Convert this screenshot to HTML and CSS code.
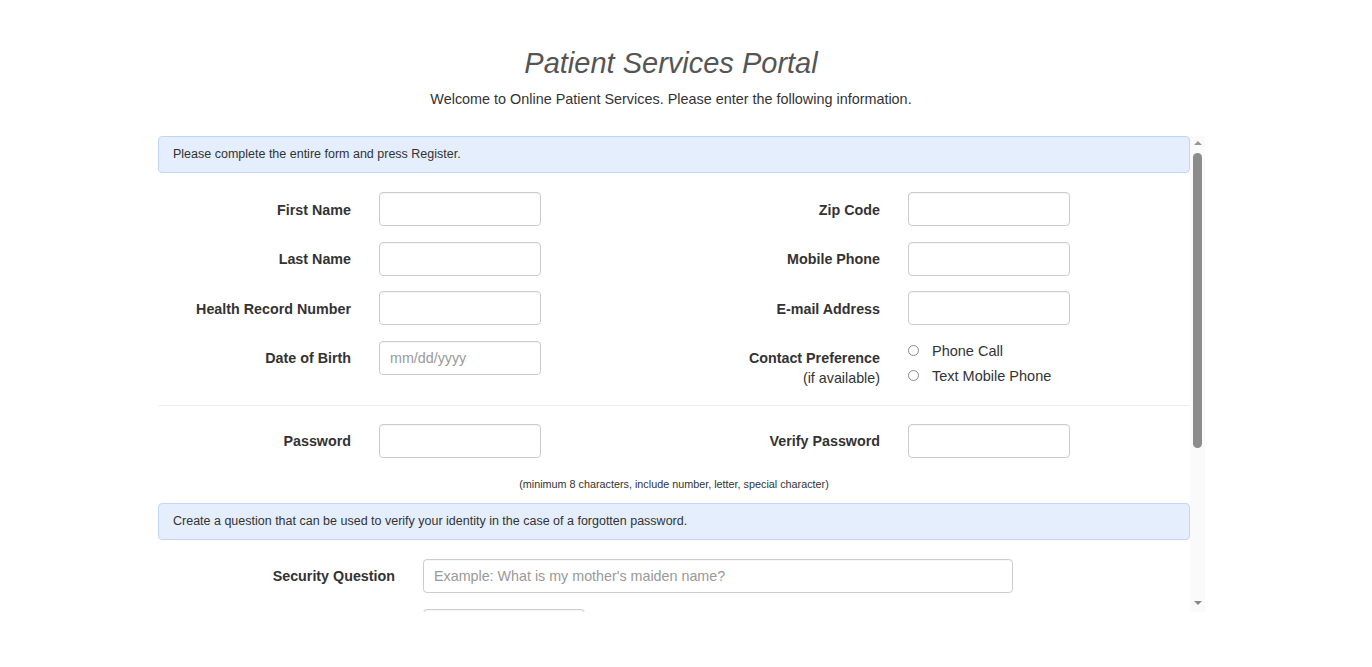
FILE: index.html
```html
<!DOCTYPE html>
<html lang="en">
<head>
<meta charset="utf-8">
<title>Patient Services Portal</title>
<link rel="stylesheet" href="styles.css">
</head>
<body>
<div class="page">
  <header class="header">
    <h1 class="title">Patient Services Portal</h1>
    <p class="welcome">Welcome to Online Patient Services. Please enter the following information.</p>
  </header>
  <div class="scroll-area">
    <div class="content">
      <div class="alert">Please complete the entire form and press Register.</div>

      <div class="rows">
        <div class="row">
          <div class="field"><label class="label">First Name</label><input class="input" type="text"></div>
          <div class="field field-right"><label class="label">Zip Code</label><input class="input" type="text"></div>
        </div>
        <div class="row">
          <div class="field"><label class="label">Last Name</label><input class="input" type="text"></div>
          <div class="field field-right"><label class="label">Mobile Phone</label><input class="input" type="text"></div>
        </div>
        <div class="row">
          <div class="field"><label class="label">Health Record Number</label><input class="input" type="text"></div>
          <div class="field field-right"><label class="label">E-mail Address</label><input class="input" type="text"></div>
        </div>
        <div class="row row-contact">
          <div class="field"><label class="label">Date of Birth</label><input class="input" type="text" placeholder="mm/dd/yyyy"></div>
          <div class="field field-right">
            <div class="label">Contact Preference<span class="sub">(if available)</span></div>
            <div class="radios">
              <label class="radio"><input type="radio" name="pref" class="radio-box">Phone Call</label>
              <label class="radio"><input type="radio" name="pref" class="radio-box">Text Mobile Phone</label>
            </div>
          </div>
        </div>
      </div>

      <hr class="divider">

      <div class="row row-pass">
        <div class="field"><label class="label">Password</label><input class="input" type="password"></div>
        <div class="field field-right"><label class="label">Verify Password</label><input class="input" type="password"></div>
      </div>
      <p class="hint">(minimum 8 characters, include number, letter, special character)</p>

      <div class="alert alert-2">Create a question that can be used to verify your identity in the case of a forgotten password.</div>

      <div class="rows rows-security">
        <div class="field field-wide"><label class="label">Security Question</label><input class="input input-wide" type="text" placeholder="Example: What is my mother's maiden name?"></div>
        <div class="field field-wide"><label class="label" aria-label="Security Answer"></label><input class="input" type="text"></div>
      </div>
    </div>
    <div class="scrollbar" aria-hidden="true">
      <span class="arrow arrow-up"></span>
      <span class="thumb"></span>
      <span class="arrow arrow-down"></span>
    </div>
  </div>
</div>
</body>
</html>
```
FILE: styles.css
```css
html, body {
  margin: 0;
  padding: 0;
  background: #ffffff;
}

body {
  font-family: "Liberation Sans", Arial, sans-serif;
  color: #333333;
  font-size: 14.4px;
}

.page {
  width: 1047px;
  margin-left: 158px;
}

.header {
  width: 1026px;
  text-align: center;
}

.title {
  margin: 45px 0 0;
  font-size: 29px;
  line-height: 36px;
  font-style: italic;
  font-weight: normal;
  color: #555555;
}

.welcome {
  margin: 8px 0 0;
  font-size: 14.4px;
  line-height: 20px;
  color: #333333;
}

.scroll-area {
  margin-top: 27px;
  height: 476px;
  display: flex;
  background: #ffffff;
}

.content {
  width: 1032px;
  flex: none;
  overflow: hidden;
}

.scrollbar {
  width: 15px;
  flex: none;
  display: flex;
  flex-direction: column;
  align-items: center;
  background: #fafafa;
}

.arrow {
  width: 0;
  height: 0;
  border-left: 4px solid transparent;
  border-right: 4px solid transparent;
}

.arrow-up {
  margin-top: 5px;
  border-bottom: 4px solid #969696;
}

.arrow-down {
  margin-bottom: 7px;
  border-top: 4px solid #888888;
}

.thumb {
  margin-top: 8px;
  width: 9px;
  height: 295px;
  border-radius: 5px;
  background: #8c8c8c;
  margin-bottom: auto;
}

.alert {
  padding: 10px 14px;
  font-size: 12.5px;
  line-height: 15px;
  color: #333333;
  background: #e4eefd;
  border: 1px solid #c2d7f4;
  border-radius: 4px;
}

.alert-2 {
  margin-top: 12px;
}

.rows {
  margin-top: 19px;
  display: flex;
  flex-direction: column;
  gap: 15.67px;
}

.row {
  display: flex;
}

.field {
  display: flex;
  align-items: flex-start;
  gap: 28px;
  width: 529px;
  flex: none;
}

.field-right {
  width: 503px;
}

.label {
  width: 193px;
  flex: none;
  text-align: right;
  font-weight: bold;
  font-size: 14.3px;
  line-height: 20px;
  padding-top: 7.5px;
  color: #333333;
}

.sub {
  display: block;
  font-weight: normal;
  line-height: 21px;
}

.input {
  box-sizing: border-box;
  width: 162px;
  height: 34px;
  flex: none;
  margin: 0;
  padding: 0 10px;
  border: 1px solid #cccccc;
  border-radius: 4px;
  font-family: "Liberation Sans", Arial, sans-serif;
  font-size: 14.3px;
  color: #555555;
  background: #ffffff;
  box-shadow: inset 0 1px 1px rgba(0, 0, 0, 0.04);
}

.input::placeholder {
  color: #999999;
}

.row-contact {
  height: 48px;
}

.radios {
  display: flex;
  flex-direction: column;
  gap: 5px;
}

.radio {
  display: flex;
  align-items: center;
  gap: 13px;
  font-size: 14.5px;
  line-height: 20px;
  color: #333333;
}

.radio-box {
  appearance: none;
  -webkit-appearance: none;
  box-sizing: border-box;
  width: 11px;
  height: 11px;
  margin: -1px 0 0;
  border: 1px solid #8a8a8a;
  border-radius: 50%;
  background: #ffffff;
}

.divider {
  margin: 16px 0 0;
  width: 1032px;
  border: 0;
  border-top: 1px solid #eeeeee;
}

.row-pass {
  margin-top: 18px;
}

.hint {
  width: 1032px;
  margin: 19px 0 0;
  text-align: center;
  font-size: 10.8px;
  line-height: 14px;
  color: #333333;
}

.rows-security {
  margin-top: 19px;
}

.field-wide {
  width: auto;
}

.field-wide .label {
  width: 237px;
}

.input-wide {
  width: 590px;
}
```
